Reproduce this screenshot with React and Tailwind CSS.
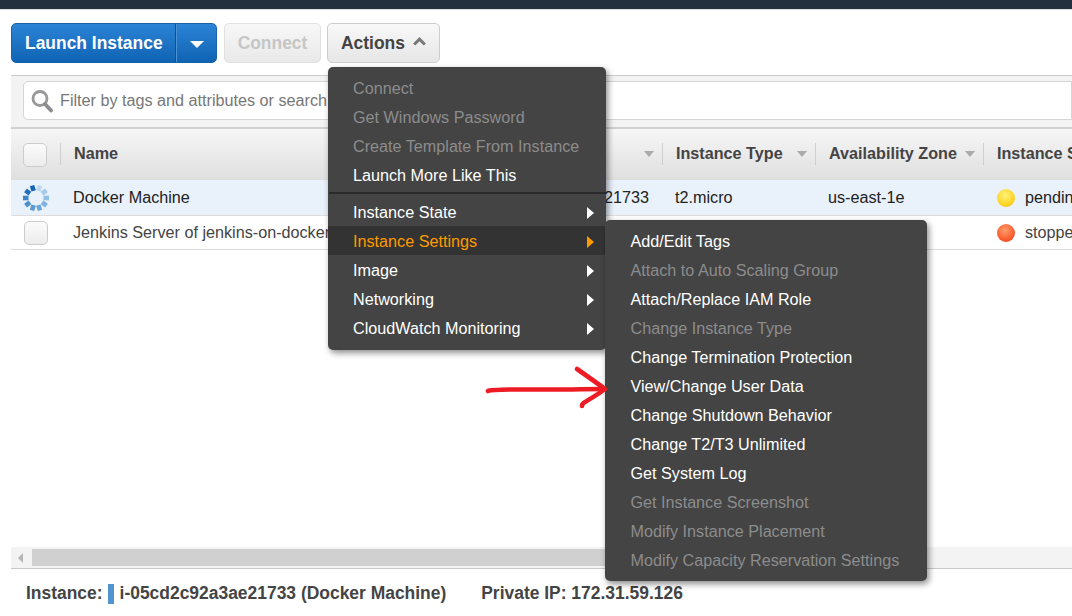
import React from "react";

const GRID = "grid grid-cols-[49px_425px_177px_153px_168px_200px]";

function SortArrow({ className }) {
  return (
    <svg width="10" height="6" viewBox="0 0 10 6" className={className}>
      <path d="M0 0H10L5 6Z" fill="#aaaaaa" />
    </svg>
  );
}

function HeadCell({ children, arrowGap }) {
  return (
    <div className="flex items-center h-[22px] mb-[2px] border-l border-[#cfcfcf] pl-[13px] pr-[8px] whitespace-nowrap overflow-hidden">
      <span>{children}</span>
      {arrowGap ? <SortArrow className="ml-auto" /> : null}
    </div>
  );
}

function Spinner() {
  const colors = ["#bcd8f0", "#a5cbea", "#8fbde4", "#7db1df", "#6aa5d9", "#5a9ad4", "#4a8fce", "#3a84c8", "#1f6fbc", "#1565b4"];
  return (
    <svg width="28" height="28" viewBox="-14 -14 28 28">
      {colors.map((c, i) => (
        <line
          key={i}
          x1="0"
          y1="-13"
          x2="0"
          y2="-7.5"
          stroke={c}
          strokeWidth="4.6"
          transform={`rotate(${i * 36 + 18})`}
        />
      ))}
    </svg>
  );
}

function Dot({ className }) {
  return <span className={`inline-block w-[18px] h-[18px] rounded-full shrink-0 ${className}`} />;
}

function Check() {
  return (
    <span className="block w-[24px] h-[24px] rounded-[5px] border border-[#cccccc] bg-gradient-to-b from-[#fbfbfb] to-[#ececec]" />
  );
}

function MenuItem({ label, disabled, arrow, active }) {
  return (
    <div
      className={`relative h-[29px] leading-[29px] whitespace-nowrap pl-[25px] ${
        active ? "bg-[#333333] text-[#ff9900]" : disabled ? "text-[#8c8c8c]" : "text-white"
      }`}
    >
      {label}
      {arrow ? (
        <svg width="7" height="12" viewBox="0 0 7 12" className="absolute right-[12px] top-[9px]">
          <path d="M0 0L7 6L0 12Z" fill={active ? "#ff9900" : "#ffffff"} />
        </svg>
      ) : null}
    </div>
  );
}

export default function App() {
  return (
    <div className="relative h-[616px] w-[1072px] overflow-hidden bg-white flex flex-col font-['Liberation_Sans',Arial,sans-serif] text-[16.18px] text-[#444444]">
      <div className="h-[10px] shrink-0 bg-[#232f3e] border-b border-[#dddddd]" />

      {/* toolbar */}
      <div className="shrink-0 flex items-start pt-[13px] pb-[12px] pl-[11px] text-[17.45px] font-bold">
        <div className="flex h-[40px] w-[206px] rounded-[5px] border border-[#1a62a8] bg-gradient-to-b from-[#2b84d6] to-[#0f63b3] text-white">
          <div className="w-[164px] pl-[13px] leading-[39px] border-r border-[#0d528f]">Launch Instance</div>
          <div className="flex-1 flex items-center justify-center border-l border-[#4c92d4]">
            <svg width="14" height="7" viewBox="0 0 14 7" className="mt-[2px]">
              <path d="M0 0H14L7 7Z" fill="#ffffff" />
            </svg>
          </div>
        </div>
        <div className="ml-[7px] h-[40px] w-[97px] rounded-[5px] border border-[#e0e0e0] bg-gradient-to-b from-[#f7f7f7] to-[#e9e9e9] text-[#c6c6c6] text-center leading-[39px]">
          Connect
        </div>
        <div className="ml-[6px] h-[40px] w-[113px] rounded-[5px] border border-[#cccccc] bg-gradient-to-b from-[#f9f9f9] to-[#e6e6e6] flex items-start pl-[13px] leading-[39px]">
          Actions
          <svg width="13" height="9" viewBox="0 0 13 9" className="ml-[8px] mt-[13px]">
            <path d="M1.2 7.5L6.5 2.2L11.8 7.5" fill="none" stroke="#777777" strokeWidth="3" />
          </svg>
        </div>
      </div>

      {/* filter band */}
      <div className="shrink-0 ml-[11px] h-[54px] border-t border-[#cccccc] border-b-2 border-b-[#d0d0d0] bg-[#f3f3f3] pt-[5px] pl-[12px]">
        <div className="h-[39px] rounded-l-[5px] border border-[#d5d5d5] bg-white flex items-center pl-[7px] text-[#777777] whitespace-nowrap">
          <svg width="22" height="24" viewBox="0 0 22 24" className="shrink-0">
            <circle cx="9" cy="9.5" r="7" fill="none" stroke="#999999" strokeWidth="2.8" />
            <path d="M14 15L20 21.5" stroke="#8c8c8c" strokeWidth="3.8" strokeLinecap="round" />
          </svg>
          <span className="ml-[7px]">Filter by tags and attributes or search by keyword</span>
        </div>
      </div>

      {/* table head */}
      <div className={`shrink-0 ml-[11px] h-[51px] items-center font-bold bg-gradient-to-b from-[#f6f6f6] to-[#dfdfdf] ${GRID}`}>
        <div className="pl-[12px]">
          <Check />
        </div>
        <HeadCell>Name</HeadCell>
        <HeadCell arrowGap>{""}</HeadCell>
        <HeadCell arrowGap>Instance Type</HeadCell>
        <HeadCell arrowGap>Availability Zone</HeadCell>
        <HeadCell>Instance State</HeadCell>
      </div>

      {/* rows */}
      <div className={`shrink-0 ml-[11px] h-[36px] items-center bg-[#e9f1fb] border-b border-[#dddddd] text-[#222222] whitespace-nowrap ${GRID}`}>
        <div className="pl-[11px] flex items-center">
          <Spinner />
        </div>
        <div className="pl-[13px]">Docker Machine</div>
        <div className="pl-[4px]">i-05cd2c92a3ae21733</div>
        <div className="pl-[13px]">t2.micro</div>
        <div className="pl-[13px]">us-east-1e</div>
        <div className="pl-[14px] flex items-center gap-[10px]">
          <Dot className="bg-[radial-gradient(circle_at_45%_35%,#fff27a,#ffd21f_65%,#e0a41a)]" />
          pending
        </div>
      </div>
      <div className={`shrink-0 ml-[11px] h-[34px] items-center border-b border-[#dddddd] whitespace-nowrap ${GRID}`}>
        <div className="pl-[13px]">
          <Check />
        </div>
        <div className="pl-[13px]">Jenkins Server of jenkins-on-docker</div>
        <div />
        <div />
        <div />
        <div className="pl-[14px] flex items-center gap-[10px]">
          <Dot className="bg-[radial-gradient(circle_at_45%_35%,#ff9d6b,#f9582c_65%,#d93b1c)]" />
          stopped
        </div>
      </div>

      <div className="flex-1" />

      {/* scroll bar */}
      <div className="shrink-0 ml-[11px] h-[22px] border-b border-[#c8c8c8] bg-[#f3f3f3] flex items-center">
        <svg width="5" height="10" viewBox="0 0 5 10" className="ml-[7px]">
          <path d="M5 0V10L0 5Z" fill="#b5b5b5" />
        </svg>
        <div className="ml-[9px] h-[17px] w-[600px] bg-[#d0d0d0]" />
      </div>

      {/* footer */}
      <div className="shrink-0 h-[47px] pt-[2px] pl-[26px] flex items-center text-[17.45px] font-bold whitespace-nowrap">
        <span>Instance:</span>
        <span className="ml-[5px] w-[6px] h-[20px] bg-[#5294cf]" />
        <span className="ml-[6px]">i-05cd2c92a3ae21733 (Docker Machine)</span>
        <span className="ml-[35px]">Private IP: 172.31.59.126</span>
      </div>

      {/* actions menu */}
      <div className="absolute left-[328px] top-[67px] w-[278px] rounded-[5px] bg-[#444444] pt-[7px] pb-[8px] shadow-[2px_3px_6px_rgba(0,0,0,0.45)]">
        <MenuItem label="Connect" disabled />
        <MenuItem label="Get Windows Password" disabled />
        <MenuItem label="Create Template From Instance" disabled />
        <MenuItem label="Launch More Like This" />
        <div className="mt-[2px] mb-[3px] ml-[1px] h-[2px] bg-[#2b2b2b]" />
        <div className="[&>div]:leading-[31px] [&_svg]:top-[10px]">
          <MenuItem label="Instance State" arrow />
          <MenuItem label="Instance Settings" arrow active />
          <MenuItem label="Image" arrow />
          <MenuItem label="Networking" arrow />
          <MenuItem label="CloudWatch Monitoring" arrow />
        </div>
      </div>

      {/* settings submenu */}
      <div className="absolute left-[605px] top-[220px] w-[322px] rounded-[5px] bg-[#444444] pt-[7px] pb-[6px] shadow-[2px_3px_6px_rgba(0,0,0,0.45)] [&>div]:pl-[25.5px]">
        <MenuItem label="Add/Edit Tags" />
        <MenuItem label="Attach to Auto Scaling Group" disabled />
        <MenuItem label="Attach/Replace IAM Role" />
        <MenuItem label="Change Instance Type" disabled />
        <MenuItem label="Change Termination Protection" />
        <MenuItem label="View/Change User Data" />
        <MenuItem label="Change Shutdown Behavior" />
        <MenuItem label="Change T2/T3 Unlimited" />
        <MenuItem label="Get System Log" />
        <MenuItem label="Get Instance Screenshot" disabled />
        <MenuItem label="Modify Instance Placement" disabled />
        <MenuItem label="Modify Capacity Reservation Settings" disabled />
      </div>

      {/* hand drawn arrow */}
      <svg width="130" height="50" viewBox="0 0 130 50" className="absolute left-[482px] top-[362px]">
        <path
          d="M6 29C10 27 30 27.5 60 27.5S105 27 122 27"
          fill="none"
          stroke="#ed1c24"
          strokeWidth="4.6"
          strokeLinecap="round"
        />
        <path
          d="M95 7C105 14 115 21 123 27C115 33 108 37 103 40C101 41 100 43 100 44"
          fill="none"
          stroke="#ed1c24"
          strokeWidth="4.6"
          strokeLinecap="round"
          strokeLinejoin="round"
        />
      </svg>
    </div>
  );
}
